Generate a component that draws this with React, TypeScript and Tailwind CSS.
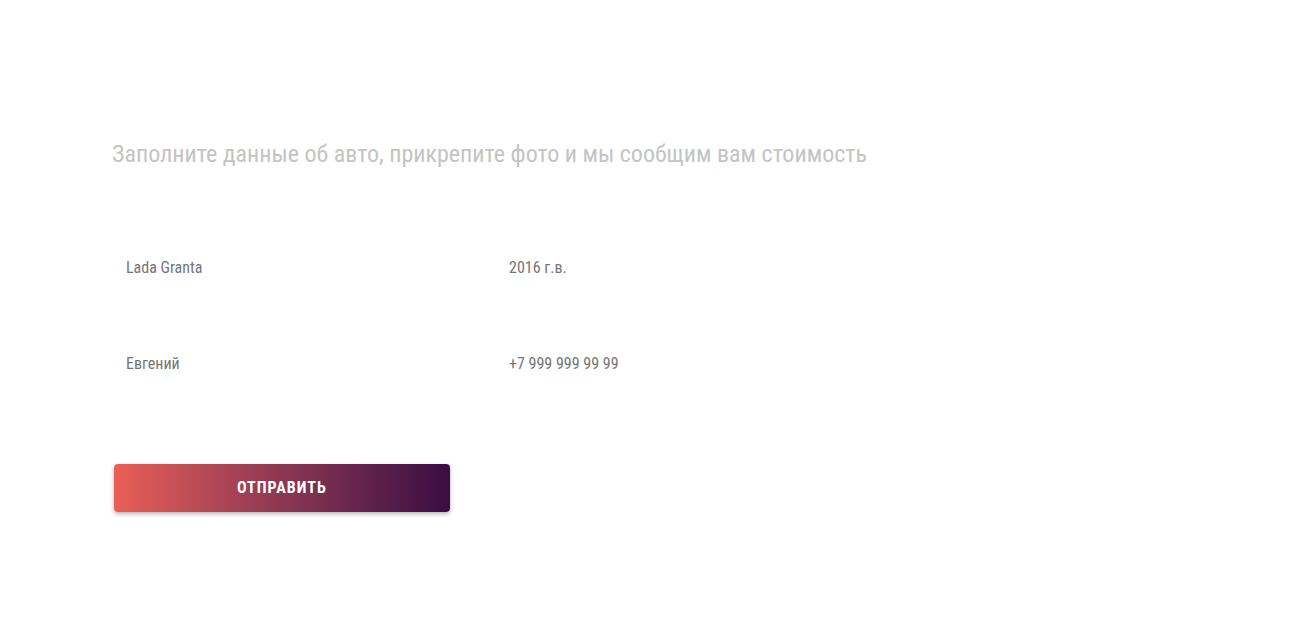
import { useState } from "react";

const font = { fontFamily: '"Roboto Condensed", Roboto, "Liberation Sans", sans-serif' };

function Field({ value, setValue }: { value: string; setValue: Function }) {
  return (
    <input
      type="text"
      value={value}
      className="w-[370px] h-[60px] px-[14px] bg-transparent text-[16px] text-[#757575] outline-none"
      onChange={(e) => setValue(e.target.value)}
    />
  );
}

export default function App() {
  const [car, setCar] = useState("Lada Granta");
  const [year, setYear] = useState("2016 г.в.");
  const [name, setName] = useState("Евгений");
  const [phone, setPhone] = useState("+7 999 999 99 99");

  return (
    <div className="min-h-[620px] bg-white pl-[112px] pt-[138px]" style={font}>
      <p className="text-[24px] leading-[32px] text-[#c4c4c4]">
        Заполните данные об авто, прикрепите фото и мы сообщим вам стоимость
      </p>
      <div className="mt-[67px] grid grid-cols-[370px_370px] gap-x-[13px] gap-y-[36px]">
        <Field value={car} setValue={setCar} />
        <Field value={year} setValue={setYear} />
        <Field value={name} setValue={setName} />
        <Field value={phone} setValue={setPhone} />
      </div>
      <button className="mt-[71px] ml-[2px] w-[336px] h-[48px] rounded-[4px] bg-gradient-to-r from-[#ea5f56] to-[#3b0b43] text-white font-bold text-[16px] tracking-[1px] shadow-[0_2px_4px_rgba(0,0,0,0.3)]">
        ОТПРАВИТЬ
      </button>
    </div>
  );
}
